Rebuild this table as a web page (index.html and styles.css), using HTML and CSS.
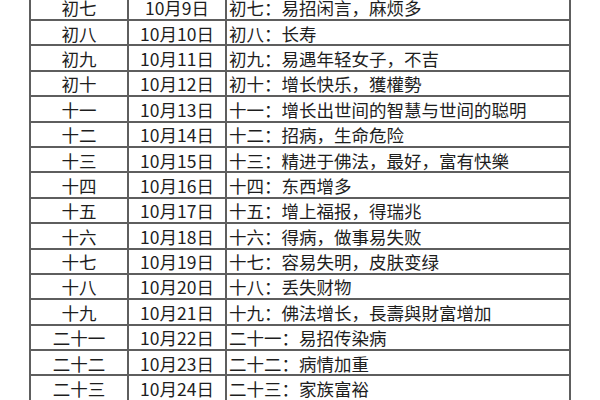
FILE: index.html
```html
<!DOCTYPE html>
<html lang="zh">
<head>
<meta charset="utf-8">
<link rel="stylesheet" href="styles.css">
</head>
<body>
<div class="sheet">
  <div class="cell c">初七</div><div class="cell c">10月9日</div><div class="cell l">初七：易招闲言，麻烦多</div>
  <div class="cell c">初八</div><div class="cell c">10月10日</div><div class="cell l">初八：长寿</div>
  <div class="cell c">初九</div><div class="cell c">10月11日</div><div class="cell l">初九：易遇年轻女子，不吉</div>
  <div class="cell c">初十</div><div class="cell c">10月12日</div><div class="cell l">初十：增长快乐，獲權勢</div>
  <div class="cell c">十一</div><div class="cell c">10月13日</div><div class="cell l">十一：增长出世间的智慧与世间的聪明</div>
  <div class="cell c">十二</div><div class="cell c">10月14日</div><div class="cell l">十二：招病，生命危险</div>
  <div class="cell c">十三</div><div class="cell c">10月15日</div><div class="cell l">十三：精进于佛法，最好，富有快樂</div>
  <div class="cell c">十四</div><div class="cell c">10月16日</div><div class="cell l">十四：东西增多</div>
  <div class="cell c">十五</div><div class="cell c">10月17日</div><div class="cell l">十五：增上福报，得瑞兆</div>
  <div class="cell c">十六</div><div class="cell c">10月18日</div><div class="cell l">十六：得病，做事易失败</div>
  <div class="cell c">十七</div><div class="cell c">10月19日</div><div class="cell l">十七：容易失明，皮肤变绿</div>
  <div class="cell c">十八</div><div class="cell c">10月20日</div><div class="cell l">十八：丢失财物</div>
  <div class="cell c">十九</div><div class="cell c">10月21日</div><div class="cell l">十九：佛法增长，長壽與財富增加</div>
  <div class="cell c">二十一</div><div class="cell c">10月22日</div><div class="cell l">二十一：易招传染病</div>
  <div class="cell c">二十二</div><div class="cell c">10月23日</div><div class="cell l">二十二：病情加重</div>
  <div class="cell c">二十三</div><div class="cell c">10月24日</div><div class="cell l">二十三：家族富裕</div>
</div>
</body>
</html>
```
FILE: styles.css
```css
html, body {
  margin: 0;
  padding: 0;
  background: #ffffff;
  overflow: hidden;
}
.sheet {
  margin: -6.4px 0 0 29px;
  width: 542px;
  box-sizing: border-box;
  padding: 2px;
  background: #5e5e5e;
  display: grid;
  grid-template-columns: 96px 96px 342px;
  grid-auto-rows: 23.4px;
  gap: 2px;
  font-family: "Noto Sans CJK SC", "Noto Sans", sans-serif;
  font-size: 17.5px;
  color: #1e1e1e;
}
.cell {
  background: #ffffff;
  display: flex;
  align-items: center;
  box-sizing: border-box;
  padding-top: 2.4px;
  white-space: nowrap;
  overflow: hidden;
  line-height: 0.95;
}
.c {
  justify-content: center;
}
.l {
  justify-content: flex-start;
  padding-left: 2px;
}
```
